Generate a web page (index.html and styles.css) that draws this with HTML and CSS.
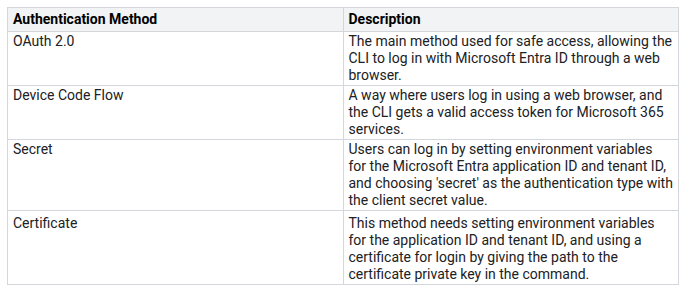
FILE: index.html
```html
<!DOCTYPE html>
<html lang="en">
<head>
    <meta charset="UTF-8">
    <meta name="viewport" content="width=device-width, initial-scale=1.0">
    <title>Authentication Methods</title>
    <link rel="stylesheet" href="styles.css">
</head>
<body>
    <table class="methods">
        <thead>
            <tr>
                <th>Authentication Method</th>
                <th>Description</th>
            </tr>
        </thead>
        <tbody>
            <tr>
                <td>OAuth 2.0</td>
                <td>The main method used for safe access, allowing the CLI to log in with Microsoft Entra ID through a web browser.</td>
            </tr>
            <tr>
                <td>Device Code Flow</td>
                <td>A way where users log in using a web browser, and the CLI gets a valid access token for Microsoft 365 services.</td>
            </tr>
            <tr>
                <td>Secret</td>
                <td>Users can log in by setting environment variables for the Microsoft Entra application ID and tenant ID, and choosing 'secret' as the authentication type with the client secret value.</td>
            </tr>
            <tr class="last">
                <td>Certificate</td>
                <td>This method needs setting environment variables for the application ID and tenant ID, and using a certificate for login by giving the path to the certificate private key in the command.</td>
            </tr>
        </tbody>
    </table>
</body>
</html>
```

FILE: styles.css
```css
body {
    font-family: Roboto, "Liberation Sans", Arial, sans-serif;
    background-color: #fff;
    color: #202124;
    margin: 7px;
}
.methods {
    width: 672px;
    border-collapse: collapse;
    table-layout: fixed;
    font-size: 14px;
    line-height: 17px;
}
.methods th,
.methods td {
    border: 1px solid #d3d6da;
    padding: 1px 5px;
    text-align: left;
    vertical-align: top;
    width: 50%;
}
.methods th {
    background-color: #f1f3f4;
    color: #000;
    font-weight: 700;
    padding: 3px 5px;
}
.methods .last td {
    padding-top: 4px;
}
```
